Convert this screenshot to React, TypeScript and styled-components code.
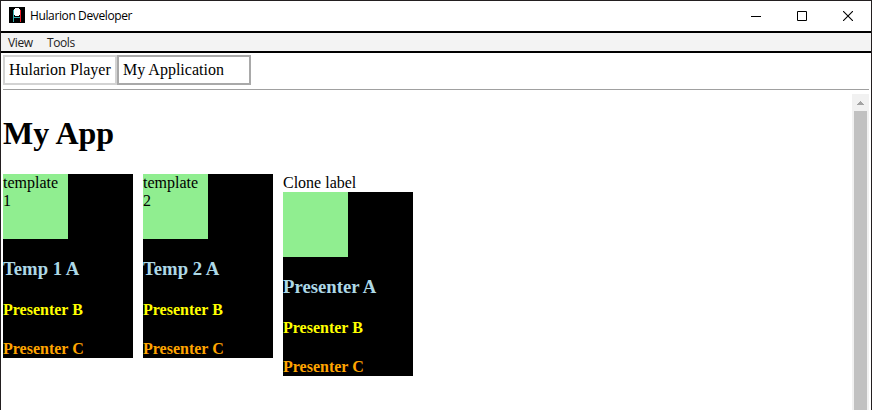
import React from "react";
import styled, { createGlobalStyle } from "styled-components";

const GlobalStyle = createGlobalStyle`
  * { box-sizing: border-box; }
  body { margin: 0; background: #fff; overflow: hidden; }
`;

const Window = styled.div`
  width: 872px;
  height: 410px;
  display: flex;
  flex-direction: column;
  overflow: hidden;
  background: #fff;
  border: 1px solid #231f20;
  border-bottom: 0;
  color: #000;
  font: 16px/18px "Liberation Serif", "Times New Roman", serif;
`;

const TitleBar = styled.header`
  height: 32px;
  flex: none;
  display: flex;
  align-items: flex-start;
  padding-left: 8px;
  border-bottom: 2px solid #000;
`;

const AppIcon = styled.svg`
  width: 16px;
  height: 16px;
  margin-top: 6px;
  flex: none;
`;

const Title = styled.span`
  flex: 1;
  margin-left: 5px;
  font: 12px/30px "Open Sans", sans-serif;
  letter-spacing: -0.38px;
`;

const WindowControl = styled.button`
  width: 46px;
  height: 29px;
  padding: 0;
  border: 0;
  background: none;
  display: flex;
  justify-content: center;
  align-items: center;
`;

const WindowControls = styled.div`
  display: flex;
`;

const MenuBar = styled.nav`
  height: 20px;
  flex: none;
  display: flex;
  gap: 14px;
  padding-left: 7px;
  background: #f3f3f3;
  border-bottom: 2px solid #000;
`;

const MenuItem = styled.span<{ $width: number }>`
  width: ${(p) => p.$width}px;
  white-space: nowrap;
  color: #212121;
  font: 12px/20px "Open Sans", sans-serif;
  letter-spacing: -0.4px;
`;

const TabStrip = styled.div`
  height: 37px;
  flex: none;
  display: flex;
  margin: 0 2px;
  padding-top: 2px;
  border-bottom: 1px solid #a0a0a0;
`;

const Tab = styled.div<{ $width: number; $active?: boolean }>`
  width: ${(p) => p.$width}px;
  height: 30px;
  padding: 4px;
  white-space: nowrap;
  border: 2px solid ${(p) => (p.$active ? "#a9a9a9" : "#d3d3d3")};
`;

const Viewport = styled.div`
  flex: 1;
  min-height: 0;
  display: flex;
  margin: 4px 2px 0;
`;

const Content = styled.main`
  flex: 1;
  padding-top: 21px;
`;

const Heading = styled.h1`
  margin: 0 0 23px;
  font-size: 32px;
  line-height: 36px;
`;

const CardRow = styled.div`
  display: flex;
  align-items: flex-start;
  gap: 10px;
`;

const Card = styled.section`
  width: 130px;
`;

const CardBody = styled.div`
  height: 184px;
  background: #000;
`;

const Swatch = styled.div`
  width: 65px;
  height: 65px;
  background: #90ee90;
`;

const PresenterA = styled.h3`
  margin: 19px 0 0;
  font-size: 18.72px;
  line-height: 22px;
  color: #add8e6;
`;

const Presenter = styled.h4<{ $color: string }>`
  margin: 21px 0 0;
  font-size: 16px;
  line-height: 18px;
  color: ${(p) => p.$color};
`;

const Scrollbar = styled.div`
  width: 17px;
  display: flex;
  flex-direction: column;
  align-items: center;
  background: #f1f1f1;
`;

const ScrollArrow = styled.svg`
  width: 17px;
  height: 17px;
  flex: none;
`;

const ScrollThumb = styled.div`
  width: 13px;
  flex: 1;
  background: #c1c1c1;
`;

const cards = [
  { swatch: "template 1", first: "Temp 1 A" },
  { swatch: "template 2", first: "Temp 2 A" },
  { label: "Clone label", first: "Presenter A" },
];

export default function App() {
  return (
    <Window>
      <GlobalStyle />
      <TitleBar>
        <AppIcon viewBox="0 0 16 16" shapeRendering="crispEdges">
          <path d="M0 0h16v16H0z" />
          <path d="M4 3h1v12H4zM5 10h6v1H5z" fill="#35b0b0" />
          <path d="M11 3h1v12h-1z" fill="#ed1c24" />
          <path d="M6 1h4v1h1v6h-1v1H6V8H5V2h1z" fill="#fff" />
        </AppIcon>
        <Title>Hularion Developer</Title>
        <WindowControls>
          <WindowControl aria-label="Minimize">
            <svg width="10" height="10" shapeRendering="crispEdges"><path d="M0 5h10v1H0z" /></svg>
          </WindowControl>
          <WindowControl aria-label="Maximize">
            <svg width="10" height="10"><path d="M.5 .5h9v9h-9z" fill="none" stroke="#000" /></svg>
          </WindowControl>
          <WindowControl aria-label="Close">
            <svg width="10" height="10"><path d="M0 0l10 10M10 0L0 10" stroke="#000" strokeWidth="1.1" /></svg>
          </WindowControl>
        </WindowControls>
      </TitleBar>
      <MenuBar>
        <MenuItem $width={25}>View</MenuItem>
        <MenuItem $width={28}>Tools</MenuItem>
      </MenuBar>
      <TabStrip>
        <Tab $width={114}>Hularion Player</Tab>
        <Tab $width={134} $active>My Application</Tab>
      </TabStrip>
      <Viewport>
        <Content>
          <Heading>My App</Heading>
          <CardRow>
            {cards.map((card) => (
              <Card key={card.first}>
                {card.label}
                <CardBody>
                  <Swatch>{card.swatch}</Swatch>
                  <PresenterA>{card.first}</PresenterA>
                  <Presenter $color="#ffff00">Presenter B</Presenter>
                  <Presenter $color="#ffa500">Presenter C</Presenter>
                </CardBody>
              </Card>
            ))}
          </CardRow>
        </Content>
        <Scrollbar>
          <ScrollArrow viewBox="0 0 17 17" shapeRendering="crispEdges">
            <path d="M8 7h1v1h1v1h1v1h1v1H5v-1h1V9h1V8h1z" fill="#a3a3a3" />
          </ScrollArrow>
          <ScrollThumb />
        </Scrollbar>
      </Viewport>
    </Window>
  );
}
